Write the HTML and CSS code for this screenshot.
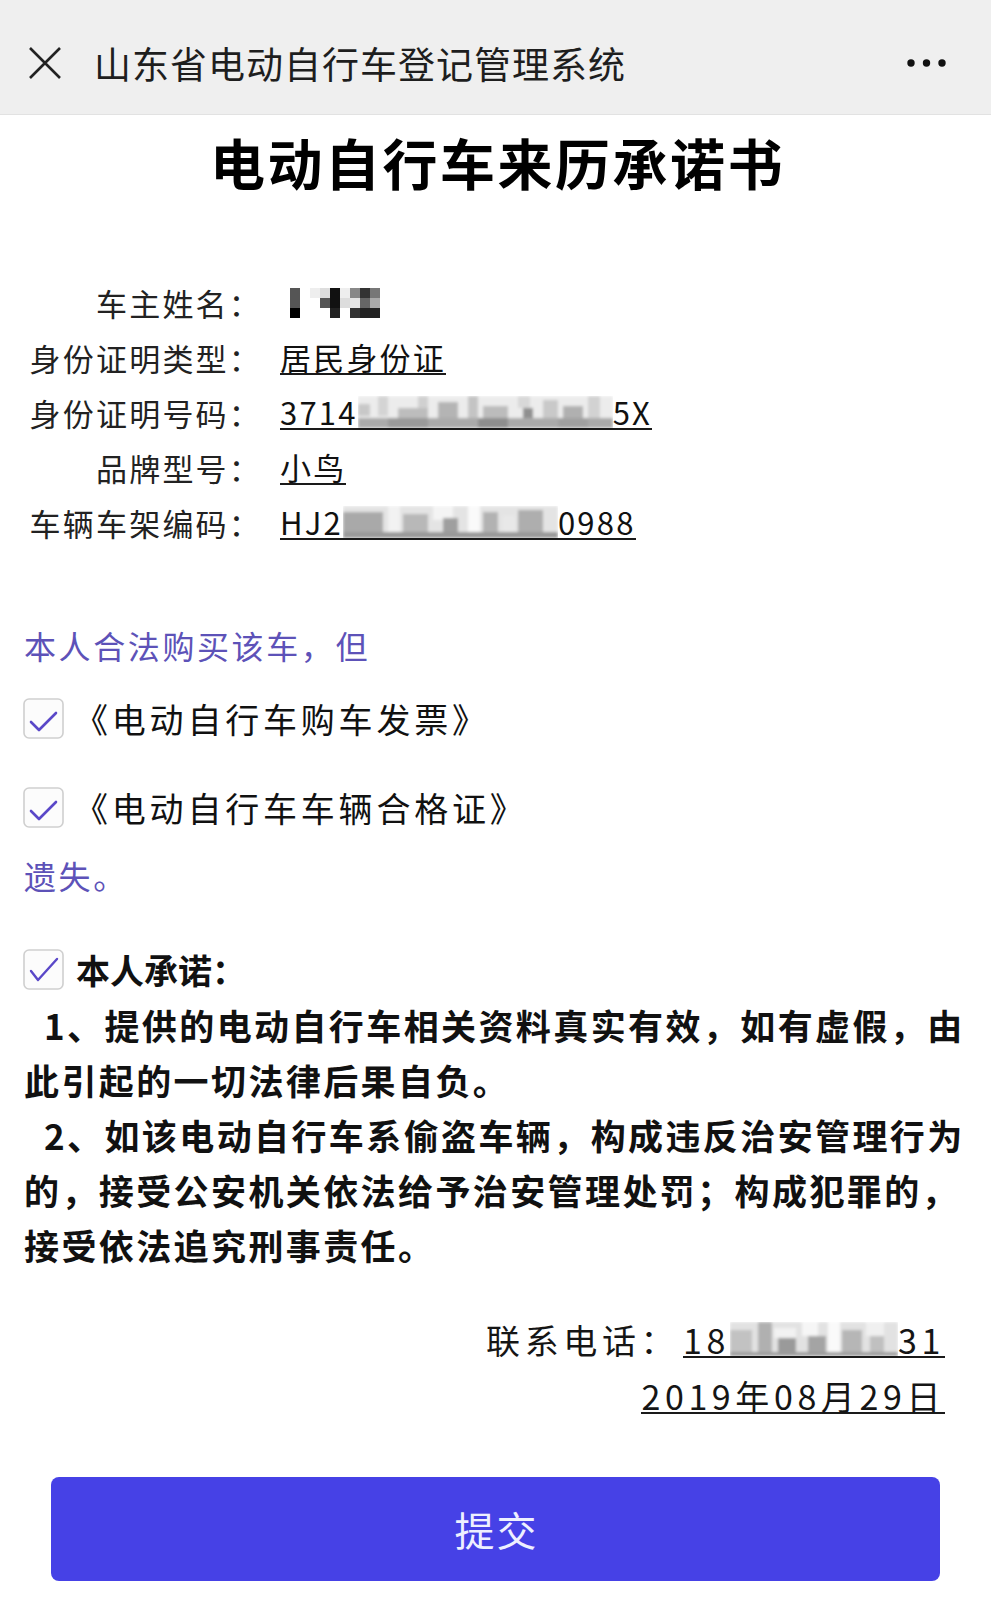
FILE: index.html
```html
<!DOCTYPE html>
<html lang="zh-CN">
<head>
<meta charset="utf-8">
<title>山东省电动自行车登记管理系统</title>
<link rel="stylesheet" href="styles.css">
</head>
<body>
<header class="topbar">
  <svg class="close" width="34" height="34" viewBox="0 0 34 34"><path d="M2 2 L32 32 M32 2 L2 32" stroke="#222" stroke-width="2.6" fill="none"/></svg>
  <div class="title">山东省电动自行车登记管理系统</div>
  <svg class="more" width="46" height="12" viewBox="0 0 46 12"><circle cx="6" cy="6" r="3.7" fill="#111"/><circle cx="21.5" cy="6" r="3.7" fill="#111"/><circle cx="37" cy="6" r="3.7" fill="#111"/></svg>
</header>

<h1 class="heading">电动自行车来历承诺书</h1>

<section class="info">
  <div class="row">
    <span class="label">车主姓名：</span>
    <span class="value plain">
      <svg width="100" height="30" viewBox="0 0 100 30">
        <rect x="10" y="0" width="10" height="10" fill="#555"/><rect x="30" y="0" width="10" height="10" fill="#eee"/><rect x="40" y="0" width="10" height="10" fill="#ddd"/><rect x="50" y="0" width="10" height="10" fill="#111"/><rect x="60" y="0" width="10" height="10" fill="#eee"/><rect x="70" y="0" width="10" height="10" fill="#888"/><rect x="80" y="0" width="10" height="10" fill="#333"/><rect x="90" y="0" width="10" height="10" fill="#777"/>
        <rect x="10" y="10" width="10" height="10" fill="#555"/><rect x="40" y="10" width="10" height="10" fill="#555"/><rect x="50" y="10" width="10" height="10" fill="#111"/><rect x="60" y="10" width="10" height="10" fill="#ddd"/><rect x="70" y="10" width="10" height="10" fill="#e5e5e5"/><rect x="80" y="10" width="10" height="10" fill="#666"/><rect x="90" y="10" width="10" height="10" fill="#aaa"/>
        <rect x="10" y="20" width="10" height="10" fill="#000"/><rect x="50" y="20" width="10" height="10" fill="#222"/><rect x="70" y="20" width="10" height="10" fill="#333"/><rect x="80" y="20" width="10" height="10" fill="#222"/><rect x="90" y="20" width="10" height="10" fill="#222"/>
      </svg>
    </span>
  </div>
  <div class="row">
    <span class="label">身份证明类型：</span>
    <span class="value">居民身份证</span>
  </div>
  <div class="row">
    <span class="label">身份证明号码：</span>
    <span class="value">3714<svg class="blur" width="255" height="32" viewBox="0 0 255 32">
        <g filter="url(#soft)">
        <rect x="0" y="0" width="255" height="32" fill="#ececec"/>
        <rect x="0" y="8" width="12" height="12" fill="#c8c8c8"/><rect x="20" y="0" width="10" height="20" fill="#d4d4d4"/><rect x="40" y="12" width="30" height="10" fill="#bdbdbd"/><rect x="60" y="0" width="10" height="12" fill="#d0d0d0"/><rect x="80" y="6" width="20" height="16" fill="#b4b4b4"/><rect x="110" y="0" width="10" height="22" fill="#c4c4c4"/><rect x="125" y="10" width="25" height="12" fill="#bcbcbc"/><rect x="160" y="0" width="12" height="12" fill="#d8d8d8"/><rect x="165" y="12" width="10" height="10" fill="#8f8f8f"/><rect x="185" y="4" width="15" height="18" fill="#c9c9c9"/><rect x="205" y="10" width="20" height="12" fill="#b0b0b0"/><rect x="230" y="0" width="12" height="22" fill="#d2d2d2"/>
        <rect x="0" y="22" width="255" height="10" fill="#aaa"/><rect x="30" y="22" width="40" height="10" fill="#9a9a9a"/><rect x="120" y="22" width="30" height="10" fill="#8e8e8e"/><rect x="200" y="22" width="30" height="10" fill="#a0a0a0"/>
        </g>
      </svg>5X</span>
  </div>
  <div class="row">
    <span class="label">品牌型号：</span>
    <span class="value">小鸟</span>
  </div>
  <div class="row">
    <span class="label">车辆车架编码：</span>
    <span class="value">HJ2<svg class="blur" width="215" height="32" viewBox="0 0 215 32">
        <g filter="url(#soft)">
        <rect x="0" y="0" width="215" height="32" fill="#e4e4e4"/>
        <rect x="0" y="6" width="40" height="20" fill="#a9a9a9"/><rect x="45" y="0" width="12" height="26" fill="#f2f2f2"/><rect x="60" y="8" width="25" height="18" fill="#b8b8b8"/><rect x="90" y="0" width="20" height="14" fill="#f4f4f4"/><rect x="100" y="12" width="15" height="14" fill="#9f9f9f"/><rect x="125" y="0" width="12" height="26" fill="#fafafa"/><rect x="140" y="6" width="15" height="20" fill="#b2b2b2"/><rect x="160" y="10" width="12" height="16" fill="#e8e8e8"/><rect x="175" y="4" width="25" height="22" fill="#aeaeae"/>
        <rect x="0" y="26" width="215" height="6" fill="#999"/>
        </g>
      </svg>0988</span>
  </div>
</section>

<p class="note">本人合法购买该车，但</p>

<label class="check first">
  <svg class="box" width="41" height="41" viewBox="0 0 41 41"><rect x="1" y="1" width="39" height="39" rx="5" fill="#fcfcfc" stroke="#cfcfcf" stroke-width="1.6"/><path d="M8 24 L16 32 L33 15" stroke="#5a48c8" stroke-width="2.6" fill="none" stroke-linecap="round" stroke-linejoin="round"/></svg>
  <span class="doc">《电动自行车购车发票》</span>
</label>
<label class="check second">
  <svg class="box" width="41" height="41" viewBox="0 0 41 41"><rect x="1" y="1" width="39" height="39" rx="5" fill="#fcfcfc" stroke="#cfcfcf" stroke-width="1.6"/><path d="M8 24 L16 32 L33 15" stroke="#5a48c8" stroke-width="2.6" fill="none" stroke-linecap="round" stroke-linejoin="round"/></svg>
  <span class="doc">《电动自行车车辆合格证》</span>
</label>

<p class="note lost">遗失。</p>

<label class="check promise">
  <svg class="box" width="41" height="41" viewBox="0 0 41 41"><rect x="1" y="1" width="39" height="39" rx="5" fill="#fcfcfc" stroke="#cfcfcf" stroke-width="1.6"/><path d="M8 22 L15 31 L34 10" stroke="#5a48c8" stroke-width="2.4" fill="none" stroke-linecap="round" stroke-linejoin="round"/></svg>
  <span class="promise-title">本人承诺：</span>
</label>

<div class="terms">
  <p class="term">1、提供的电动自行车相关资料真实有效，如有虚假，由此引起的一切法律后果自负。</p>
  <p class="term">2、如该电动自行车系偷盗车辆，构成违反治安管理行为的，接受公安机关依法给予治安管理处罚；构成犯罪的，接受依法追究刑事责任。</p>
</div>

<div class="contact">
  <div class="line">
    <span class="clabel">联系电话：</span>
    <span class="cvalue">18<svg class="blur" width="168" height="34" viewBox="0 0 168 34">
        <g filter="url(#soft)">
        <rect x="0" y="0" width="168" height="34" fill="#e2e2e2"/>
        <rect x="0" y="8" width="22" height="22" fill="#c2c2c2"/><rect x="28" y="0" width="14" height="30" fill="#b0b0b0"/><rect x="44" y="6" width="22" height="10" fill="#f2f2f2"/><rect x="48" y="16" width="18" height="14" fill="#9a9a9a"/><rect x="72" y="0" width="16" height="14" fill="#f6f6f6"/><rect x="78" y="14" width="18" height="16" fill="#a4a4a4"/><rect x="98" y="0" width="12" height="30" fill="#fafafa"/><rect x="112" y="8" width="20" height="22" fill="#b6b6b6"/><rect x="136" y="0" width="18" height="14" fill="#f0f0f0"/><rect x="140" y="14" width="14" height="16" fill="#c0c0c0"/>
        <rect x="0" y="30" width="168" height="4" fill="#9c9c9c"/>
        </g>
      </svg>31</span>
  </div>
  <div class="line">
    <span class="cvalue">2019年08月29日</span>
  </div>
</div>

<button class="submit" type="button">提交</button>

<svg class="defs" width="0" height="0"><defs><filter id="soft" x="-5%" y="-10%" width="110%" height="120%"><feGaussianBlur stdDeviation="1.4"/></filter></defs></svg>
</body>
</html>
```
FILE: styles.css
```css
* { box-sizing: border-box; }

html, body {
  margin: 0;
  padding: 0;
  background: #ffffff;
}

body {
  width: 991px;
  font-family: "Noto Sans CJK SC", "Noto Sans", sans-serif;
  color: #151515;
}

.topbar {
  height: 115px;
  background: #efefef;
  border-bottom: 1px solid #e2e2e2;
  display: flex;
  align-items: center;
  padding: 12px 40px 0 28px;
}

.close { flex: none; }

.title {
  margin-left: 32px;
  font-size: 37px;
  letter-spacing: 1px;
  color: #1e1e1e;
  line-height: 50px;
}

.more { margin-left: auto; flex: none; }

.heading {
  margin: 14px 0 0;
  padding-left: 4px;
  text-align: center;
  font-size: 55px;
  line-height: 64px;
  letter-spacing: 2.5px;
  font-weight: 700;
  color: #000;
}

.info {
  margin-top: 82px;
  padding-left: 24px;
}

.row {
  display: flex;
  align-items: center;
  height: 55px;
  font-size: 31px;
  letter-spacing: 2.2px;
}

.label {
  width: 238px;
  text-align: right;
  color: #222;
  line-height: 55px;
  white-space: nowrap;
}

.value {
  margin-left: 18px;
  display: inline-flex;
  align-items: center;
  height: 34px;
  line-height: 32px;
  border-bottom: 2px solid #1a1a1a;
  color: #111;
}

.value.plain { border-bottom: none; }

.blur { display: block; flex: none; }

.note {
  margin: 70px 0 0;
  padding-left: 24px;
  font-size: 32px;
  line-height: 50px;
  letter-spacing: 2.6px;
  color: #5d52b8;
}

.note.lost { margin-top: 22px; }

.check {
  display: flex;
  align-items: center;
  height: 41px;
  padding-left: 23px;
}

.check.first { margin-top: 28px; }
.check.second { margin-top: 48px; }
.check.promise { margin-top: 49px; }

.box { flex: none; display: block; }

.doc {
  margin-left: 10px;
  font-size: 34px;
  letter-spacing: 3.8px;
  color: #111;
  line-height: 41px;
}

.promise-title {
  margin-left: 12px;
  font-size: 34px;
  font-weight: 700;
  color: #111;
  line-height: 41px;
}

.terms {
  margin-top: 7px;
  padding: 0 12px 0 24px;
}

.term {
  margin: 0;
  text-indent: 20px;
  font-size: 35px;
  line-height: 55px;
  letter-spacing: 2.4px;
  font-weight: 700;
  color: #111;
}

.contact {
  margin-top: 40px;
  padding-right: 46px;
  display: flex;
  flex-direction: column;
  align-items: flex-end;
}

.line {
  display: flex;
  align-items: center;
  height: 56px;
  font-size: 34px;
  letter-spacing: 4.6px;
  color: #151515;
}

.clabel {
  line-height: 56px;
  margin-right: 4px;
}

.cvalue {
  display: inline-flex;
  align-items: center;
  height: 35px;
  line-height: 33px;
  border-bottom: 2px solid #1a1a1a;
}

.submit {
  display: block;
  margin: 53px 0 0 51px;
  width: 889px;
  height: 104px;
  border: none;
  border-radius: 8px;
  background: #4641e6;
  color: #eef0ff;
  font-family: "Noto Sans CJK SC", sans-serif;
  font-size: 40px;
  letter-spacing: 2px;
  padding: 0 0 0 2px;
}

.defs { position: absolute; width: 0; height: 0; }
```
